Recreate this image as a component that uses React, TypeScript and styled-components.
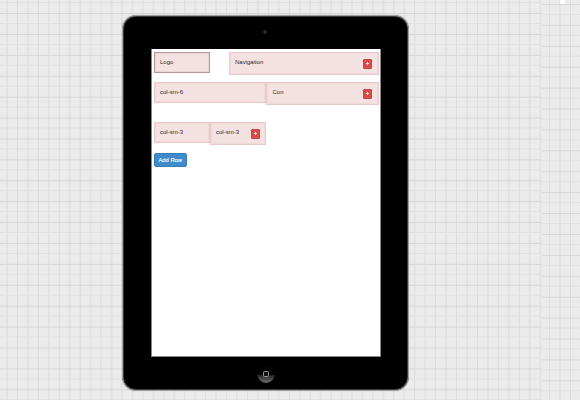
import React from "react";
import styled, { createGlobalStyle, css } from "styled-components";

const GlobalStyle = createGlobalStyle`
  * { box-sizing: border-box; }
  body { margin: 0; font-family: "Liberation Sans", Arial, sans-serif; overflow: hidden; }
`;

const Page = styled.main`
  display: grid;
  grid-template-columns: 542px 38px;
  width: 580px;
  height: 400px;
  background: #e9e9e9;
`;

const grid = css<{ $x: number; $y: number }>`
  background-color: #ebebeb;
  background-image:
    linear-gradient(#d6d6d6 0 1px, transparent 1px 10px, #e0e0e0 10px 11.4px, transparent 11.4px),
    linear-gradient(90deg, #dcdcdc 0 1px, transparent 1px 10px, #e2e2e2 10px 12px, transparent 12px);
  background-size: 100% 20.92px, 20.92px 100%;
  background-position: 0 ${(p) => p.$y}px, ${(p) => p.$x}px 0;
`;

const Desk = styled.section<{ $x: number; $y: number }>`
  ${grid}
  padding: 15px 0 0 122px;
`;

const Margin = styled.aside<{ $x: number; $y: number }>`
  ${grid}
  padding-left: 18px;
`;

const Notch = styled.div`
  width: 5px;
  height: 4px;
  background: #fff;
`;

const Tablet = styled.div`
  display: flex;
  flex-direction: column;
  align-items: center;
  width: 287px;
  height: 376px;
  border: 1px solid #a0a0a0;
  border-radius: 14px;
  background: #000;
  box-shadow: inset 0 0 0 1px #3c3c3c, 0 0 1px #aaa;
`;

const CameraBar = styled.div`
  display: flex;
  justify-content: center;
  width: 100%;
  height: 33px;
  padding: 14px 1px 0 0;
`;

const Camera = styled.div`
  width: 4px;
  height: 4px;
  border-radius: 50%;
  background: #26384a;
  border: 1px solid #292929;
`;

const Screen = styled.div`
  width: 230px;
  height: 308px;
  padding: 3px 1px 0 2px;
  border: solid #888;
  border-width: 0 1px 1px 1px;
  background: #fff;
`;

const HomeBar = styled.div`
  padding-top: 9px;
`;

const Row = styled.div<{ $height: number }>`
  display: flex;
  align-items: flex-start;
  height: ${(p) => p.$height}px;
`;

const Column = styled.div<{ $width: number; $tall?: boolean; $selected?: boolean; $offset?: number }>`
  display: flex;
  justify-content: space-between;
  align-items: flex-start;
  width: ${(p) => p.$width}px;
  height: ${(p) => (p.$tall ? 23 : 21)}px;
  margin-left: ${(p) => p.$offset ?? 0}px;
  padding: 5px 5.5px 0 5.5px;
  border: 1px solid ${(p) => (p.$selected ? "#b99599" : "#e9c9c9")};
  box-shadow: inset 0 0 0 1px ${(p) => (p.$selected ? "#edd5d5" : "#f1dada")};
  background: #f4e1e1;
  color: #2d2929;
  font-size: 6px;
  line-height: 9px;
  white-space: nowrap;
`;

const AddColumn = styled.button`
  display: flex;
  align-items: center;
  justify-content: center;
  width: 9px;
  height: 10px;
  margin-top: 0.5px;
  padding: 0;
  border: 1px solid #cf4440;
  border-radius: 1px;
  background: #d64b47;
`;

const AddRow = styled.button`
  display: block;
  width: 33.5px;
  height: 14px;
  padding: 0;
  border: 1px solid #367cb9;
  border-radius: 2px;
  background: #428bca;
  color: #fff;
  font: 5.8px/12px "Liberation Sans", Arial, sans-serif;
  -webkit-text-stroke: 0.1px #fff;
`;

const PlusIcon = () => (
  <svg width="5" height="5" viewBox="0 0 5 5" fill="none">
    <path d="M2.5 1v3M1 2.5h3" stroke="#f8dfde" strokeWidth="1" />
  </svg>
);

const HomeIcon = () => (
  <svg width="18" height="18" viewBox="0 0 18 18" fill="none">
    <defs>
      <linearGradient id="home-shine" x1="0" y1="0" x2="0" y2="1">
        <stop offset="0" stopColor="#242424" />
        <stop offset="1" stopColor="#6c6c6c" />
      </linearGradient>
    </defs>
    <circle cx="9" cy="9" r="8.5" fill="#050505" />
    <path d="M.5 8.7C3.2 9.7 14.8 9.7 17.5 8.7A8.5 8.2 0 0 1 .5 8.7Z" fill="url(#home-shine)" />
    <rect x="6.5" y="5.5" width="5" height="5" rx="1" fill="#151515" stroke="#9a9a9a" />
  </svg>
);

const Add = () => (
  <AddColumn aria-label="Add column">
    <PlusIcon />
  </AddColumn>
);

export default function App() {
  return (
    <>
      <GlobalStyle />
      <Page>
        <Desk $x={17} $y={13}>
          <Tablet>
            <CameraBar>
              <Camera />
            </CameraBar>
            <Screen>
              <Row $height={30}>
                <Column $width={56} $selected>Logo</Column>
                <Column $width={150} $offset={19} $tall>Navigation<Add /></Column>
              </Row>
              <Row $height={40}>
                <Column $width={112.5}>col-sm-6</Column>
                <Column $width={112.5} $tall>Con<Add /></Column>
              </Row>
              <Row $height={31}>
                <Column $width={56}>col-sm-3</Column>
                <Column $width={56.5} $tall>col-sm-3<Add /></Column>
              </Row>
              <AddRow>Add Row</AddRow>
            </Screen>
            <HomeBar>
              <HomeIcon />
            </HomeBar>
          </Tablet>
        </Desk>
        <Margin $x={28} $y={4}>
          <Notch />
        </Margin>
      </Page>
    </>
  );
}
